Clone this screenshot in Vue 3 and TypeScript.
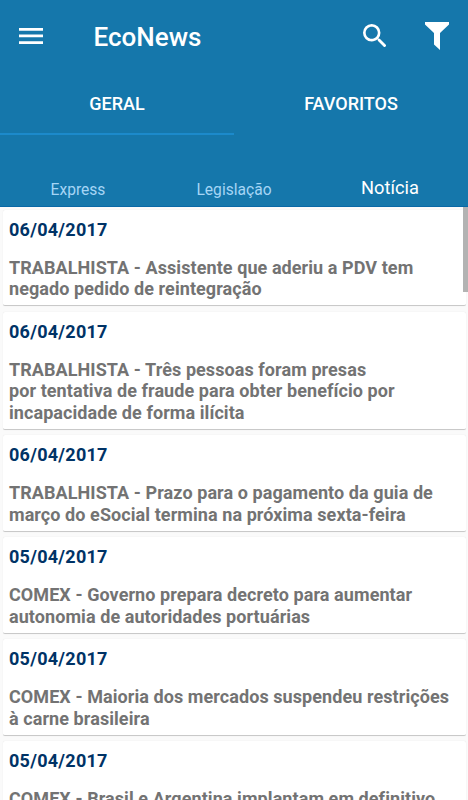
<script setup lang="ts">
interface Article {
  date: string
  lines: string[]
}

const sections: string[] = ['GERAL', 'FAVORITOS']
const categories: string[] = ['Express', 'Legislação', 'Notícia']
const activeSection = 'GERAL'
const activeCategory = 'Notícia'

const articles: Article[] = [
  { date: '06/04/2017', lines: ['TRABALHISTA - Assistente que aderiu a PDV tem', 'negado pedido de reintegração'] },
  { date: '06/04/2017', lines: ['TRABALHISTA - Três pessoas foram presas', 'por tentativa de fraude para obter benefício por', 'incapacidade de forma ilícita'] },
  { date: '06/04/2017', lines: ['TRABALHISTA - Prazo para o pagamento da guia de', 'março do eSocial termina na próxima sexta-feira'] },
  { date: '05/04/2017', lines: ['COMEX - Governo prepara decreto para aumentar', 'autonomia de autoridades portuárias'] },
  { date: '05/04/2017', lines: ['COMEX - Maioria dos mercados suspendeu restrições', 'à carne brasileira'] },
  { date: '05/04/2017', lines: ['COMEX - Brasil e Argentina implantam em definitivo'] },
]
</script>

<template>
  <div class="screen">
    <header class="header">
      <div class="toolbar">
        <button class="icon-button" aria-label="Menu">
          <svg class="menu-icon" viewBox="0 0 24 16"><path d="M0 0h24v2.7H0zM0 6.6h24v2.7H0zM0 13.3h24V16H0z" /></svg>
        </button>
        <h1 class="title">EcoNews</h1>
        <button class="icon-button" aria-label="Buscar">
          <svg class="search-icon" viewBox="3 3 17.49 17.49"><path d="M15.5 14h-.79l-.28-.27A6.471 6.471 0 0 0 16 9.5 6.5 6.5 0 1 0 9.5 16c1.61 0 3.09-.59 4.23-1.57l.27.28v.79l5 4.99L20.49 19l-4.99-5zm-6 0C7.01 14 5 11.99 5 9.5S7.01 5 9.5 5 14 7.01 14 9.5 11.99 14 9.5 14z" /></svg>
        </button>
        <button class="icon-button" aria-label="Filtrar">
          <svg class="filter-icon" viewBox="0 0 24 28"><path d="M0 0h24v2.5l-9 8.5V28l-6-5.5V11L0 2.5z" /></svg>
        </button>
      </div>
      <nav class="sections">
        <a v-for="s in sections" :key="s" class="section" :class="{ active: s === activeSection }">{{ s }}</a>
      </nav>
      <nav class="categories">
        <a v-for="c in categories" :key="c" class="category" :class="{ active: c === activeCategory }">{{ c }}</a>
      </nav>
    </header>
    <main class="feed">
      <article v-for="(a, i) in articles" :key="i" class="card">
        <time class="date">{{ a.date }}</time>
        <p class="headline">
          <span v-for="line in a.lines" :key="line" class="line">{{ line }}</span>
        </p>
      </article>
      <div class="scroll-thumb"></div>
    </main>
  </div>
</template>

<style>
body {
  margin: 0;
  overflow: hidden;
}
</style>

<style scoped>
.screen {
  display: flex;
  flex-direction: column;
  height: 800px;
  overflow: hidden;
  background: #fafafa;
  font-family: Roboto, 'Liberation Sans', sans-serif;
}
.header {
  flex: none;
  box-sizing: border-box;
  height: 207px;
  background: #1577ab;
  border-bottom: 1px solid #0868a6;
  color: #fff;
}
.toolbar {
  display: flex;
  align-items: center;
  box-sizing: border-box;
  height: 74px;
  padding: 0 19px;
}
.icon-button {
  display: flex;
  padding: 0;
  border: 0;
  background: none;
}
svg {
  display: block;
  fill: #fff;
}
.menu-icon {
  width: 24px;
  height: 16px;
  margin-top: -2px;
}
.title {
  flex: 1;
  margin: 0 0 0 50.6px;
  font-size: 26px;
  line-height: 32px;
  font-weight: 500;
}
.search-icon {
  width: 23.5px;
  height: 23.5px;
  margin: -3px 39px 0 0;
}
.filter-icon {
  width: 24px;
  height: 28px;
  margin-top: -2px;
}
.sections {
  display: flex;
  height: 61px;
}
.section {
  flex: 1;
  box-sizing: border-box;
  padding: 19px 0 0;
  text-align: center;
  font-size: 18px;
  line-height: 22px;
  font-weight: 500;
}
.section.active {
  border-bottom: 2px solid #1c8acb;
}
.categories {
  display: flex;
  height: 71px;
}
.category {
  flex: 1;
  padding-top: 44px;
  text-align: center;
  font-size: 15.6px;
  line-height: 23px;
  color: #a5d5f5;
}
.category.active {
  padding-top: 42px;
  font-size: 18.3px;
  line-height: 22px;
  color: #fff;
}
.feed {
  position: relative;
  flex: 1;
  display: flex;
  flex-direction: column;
  gap: 5.5px;
  min-height: 0;
  padding: 2.5px 2px 0 3px;
  overflow: hidden;
}
.card {
  flex: none;
  box-sizing: border-box;
  padding: 9px 6px 5.5px;
  border-radius: 2px;
  background: #fff;
  border-bottom: 1px solid #c9c9c9;
  box-shadow: 0 0 1px rgba(0, 0, 0, 0.12);
}
.date {
  display: block;
  font-size: 18px;
  line-height: 22px;
  font-weight: 700;
  letter-spacing: 0.27px;
  color: #003366;
}
.headline {
  margin: 16px 0 0;
  font-size: 18px;
  line-height: 21.5px;
  font-weight: 700;
  letter-spacing: 0.075px;
  color: #737373;
}
.line {
  display: block;
  white-space: nowrap;
}
.scroll-thumb {
  position: absolute;
  top: 0;
  right: 0;
  width: 5px;
  height: 85px;
  background: #b3b3b3;
}
</style>
